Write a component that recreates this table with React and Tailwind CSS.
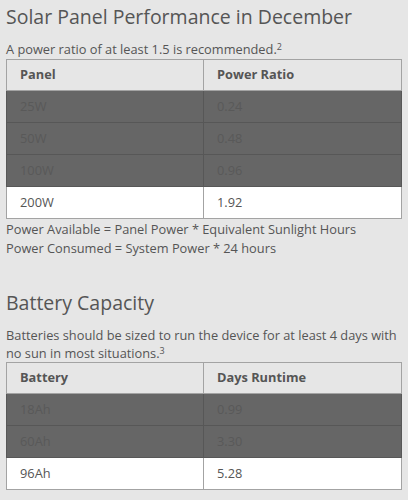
import React from 'react';

const panels = [
  { name: '25W', ratio: '0.24', dim: true },
  { name: '50W', ratio: '0.48', dim: true },
  { name: '100W', ratio: '0.96', dim: true },
  { name: '200W', ratio: '1.92', dim: false },
];

const batteries = [
  { name: '18Ah', days: '0.99', dim: true },
  { name: '60Ah', days: '3.30', dim: true },
  { name: '96Ah', days: '5.28', dim: false },
];

function DataTable({ head, rows }) {
  return (
    <table className="w-full border-collapse border border-[#a3a3a3] text-[12.8px] table-fixed">
      <colgroup>
        <col className="w-[197px]" />
        <col />
      </colgroup>
      <thead>
        <tr className="bg-[#e6e6e6]">
          {head.map((h) => (
            <th key={h} className="h-[31px] border border-[#a3a3a3] px-[13px] text-left font-bold text-[#555]">
              {h}
            </th>
          ))}
        </tr>
      </thead>
      <tbody>
        {rows.map((r) => (
          <tr key={r[0]} className={r[2] ? 'bg-[#666666] text-[#595959]' : 'bg-white text-[#555]'}>
            <td className={`h-[32px] border px-[13px] ${r[2] ? 'border-[#575757]' : 'border-[#a3a3a3]'}`}>{r[0]}</td>
            <td className={`h-[32px] border px-[13px] ${r[2] ? 'border-[#575757]' : 'border-[#a3a3a3]'}`}>{r[1]}</td>
          </tr>
        ))}
      </tbody>
    </table>
  );
}

export default function App() {
  return (
    <div className="min-h-[500px] bg-[#e6e6e6] px-[6px] pt-[3px] text-[#555] font-['Open_Sans',sans-serif]">
      <h2 className="text-[19.5px] leading-[27px]">Solar Panel Performance in December</h2>
      <p className="mt-[10px] text-[12.8px] leading-[19px]">
        A power ratio of at least 1.5 is recommended.<sup className="text-[9px]">2</sup>
      </p>
      <DataTable head={['Panel', 'Power Ratio']} rows={panels.map((p) => [p.name, p.ratio, p.dim])} />
      <p className="text-[12.8px] leading-[19px] pt-[1px]">
        Power Available = Panel Power * Equivalent Sunlight Hours
        <br />
        Power Consumed = System Power * 24 hours
      </p>

      <h2 className="mt-[31px] text-[19.5px] leading-[27px]">Battery Capacity</h2>
      <p className="mt-[10px] text-[12.8px] leading-[18px]">
        Batteries should be sized to run the device for at least 4 days with no sun in most situations.
        <sup className="text-[9px]">3</sup>
      </p>
      <DataTable head={['Battery', 'Days Runtime']} rows={batteries.map((b) => [b.name, b.days, b.dim])} />
    </div>
  );
}
